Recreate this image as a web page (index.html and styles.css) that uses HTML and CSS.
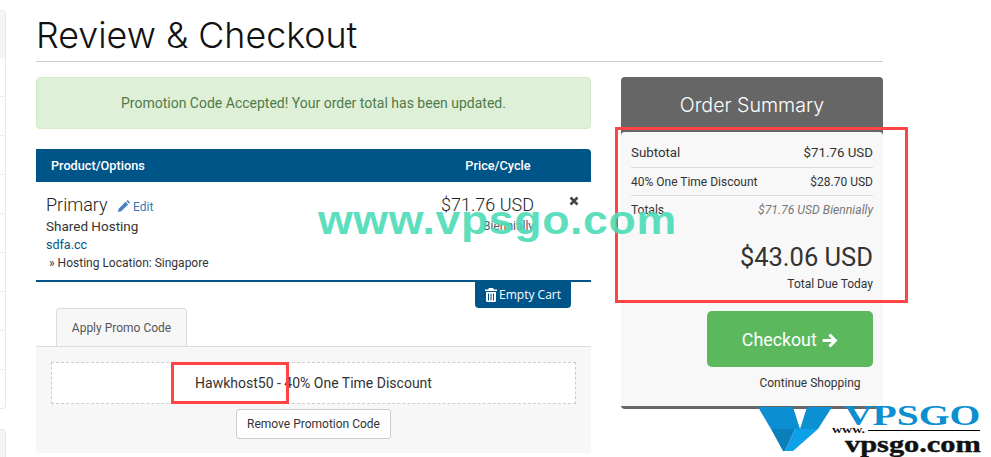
FILE: index.html
```html
<!DOCTYPE html>
<html lang="en">

<head>
    <meta charset="UTF-8">
    <meta name="viewport" content="width=device-width, initial-scale=1.0">
    <title>Review &amp; Checkout</title>
    <link rel="stylesheet" href="styles.css">
</head>

<body>
    <div class="page">
        <aside class="sidebar">
            <div class="side-card">
                <div class="side-head"></div>
                <div class="side-row"></div>
                <div class="side-row"></div>
                <div class="side-row"></div>
                <div class="side-row"></div>
                <div class="side-row"></div>
                <div class="side-row"></div>
                <div class="side-row"></div>
                <div class="side-row"></div>
            </div>
            <div class="side-card side-second">
                <div class="side-head"></div>
            </div>
        </aside>

        <main class="main">
            <h1 class="page-title">Review &amp; Checkout</h1>

            <div class="columns">
                <section class="cart">
                    <div class="alert">Promotion Code Accepted! Your order total has been updated.</div>

                    <div class="cart-head">
                        <div class="col-product">Product/Options</div>
                        <div class="col-price">Price/Cycle</div>
                    </div>

                    <div class="cart-item">
                        <div class="col-product">
                            <div class="item-name">Primary
                                <a class="edit-link" href="#">
                                    <svg class="pencil" viewBox="0 0 14 14" width="13" height="13">
                                        <path d="M1 13l.8-3.6 7.4-7.4 2.8 2.8-7.4 7.4zM10 1.200l.8-.7c.4-.3.9-.3 1.200 0l1.500 1.500c.3.300.3.800 0 1.200l-.7.800z" />
                                    </svg>Edit</a>
                            </div>
                            <div class="item-group">Shared Hosting</div>
                            <div class="item-domain">sdfa.cc</div>
                            <div class="item-option">&raquo; Hosting Location: Singapore</div>
                        </div>
                        <div class="col-price">
                            <div class="item-price">$71.76 USD</div>
                            <div class="item-cycle">Biennially</div>
                        </div>
                        <div class="col-remove">
                            <svg viewBox="0 0 10 10" width="10" height="10">
                                <path d="M1.500 1.500l7 7M8.500 1.500l-7 7" />
                            </svg>
                        </div>
                    </div>

                    <div class="cart-actions">
                        <a class="btn-empty" href="#">
                            <svg viewBox="0 0 12 14" width="12" height="14">
                                <path d="M4 0h4l1 1.500h3V3H0V1.500h3zM1 4h10v8.500c0 .8-.6 1.500-1.300 1.500H2.300C1.600 14 1 13.300 1 12.500zM3 5.500v7h1v-7zM5.500 5.500v7h1v-7zM8 5.500v7h1v-7z" fill-rule="evenodd" />
                            </svg>
                            Empty Cart</a>
                    </div>

                    <div class="tabs">
                        <div class="tab">Apply Promo Code</div>
                    </div>
                    <div class="tab-body">
                        <div class="promo-box">Hawkhost50 - 40% One Time Discount</div>
                        <a class="btn-remove" href="#">Remove Promotion Code</a>
                    </div>
                </section>

                <section class="summary">
                    <h2 class="summary-title">Order Summary</h2>
                    <div class="summary-body">
                        <div class="sum-row"><span>Subtotal</span><span>$71.76 USD</span></div>
                        <div class="sum-row sum-discount"><span>40% One Time Discount</span><span>$28.70 USD</span></div>
                        <div class="sum-totals"><span>Totals</span><em>$71.76 USD Biennially</em></div>
                        <div class="total-due">$43.06 USD</div>
                        <div class="total-label">Total Due Today</div>
                        <a class="btn-checkout" href="#">Checkout
                            <svg viewBox="0 0 16 16" width="17" height="17">
                                <path d="M1.500 8h12M8 2.500L13.500 8 8 13.500" />
                            </svg>
                        </a>
                        <a class="continue" href="#">Continue Shopping</a>
                    </div>
                </section>
            </div>
        </main>
    </div>

    <!-- screenshot annotations -->
    <div class="mark mark-summary"></div>
    <div class="mark mark-code"></div>
    <div class="watermark">www.vpsgo.com</div>
    <div class="logo">
        <svg class="logo-v" viewBox="0 0 74 44" width="74" height="44">
            <path fill="#0c8fd2" d="M0 0h35l7 22H13z" />
            <path fill="#0b90d2" d="M49 0h25L60 22H42z" />
            <path fill="#0a7fba" d="M13 22h24L27 44h-2z" />
            <path fill="#0ea0e8" d="M37 22h23L35 44h-8z" />
        </svg>
        <div class="logo-name">VPSGO</div>
        <div class="logo-www">www.</div>
        <div class="logo-line"></div>
        <div class="logo-url">vpsgo.com</div>
    </div>
</body>

</html>
```

FILE: styles.css
```css
html,
body {
    height: 100%;
    margin: 0;
    overflow: hidden;
}

body {
    font-family: Roboto, "Liberation Sans", sans-serif;
    font-size: 13px;
    color: #333;
    background-color: #fff;
    position: relative;
}

a {
    text-decoration: none;
    color: inherit;
}

.page {
    display: flex;
    align-items: flex-start;
}

/* cut off sidebar on the left edge */
.sidebar {
    width: 6px;
    padding-top: 10px;
    flex: none;
}

.side-card {
    border: 1px solid #e8e8e8;
    border-left: none;
    border-radius: 0 4px 4px 0;
    height: 397px;
}

.side-head {
    height: 46px;
    background-color: #f5f5f5;
    border-bottom: 1px solid #eee;
}

.side-row {
    height: 38px;
    border-bottom: 1px solid #eee;
}

.side-second {
    margin-top: 20px;
    height: 28px;
    border-bottom: none;
    border-radius: 0 4px 0 0;
}

.side-second .side-head {
    height: 28px;
    border-bottom: none;
}

.main {
    width: 847px;
    margin-left: 30px;
}

.page-title {
    margin: 14px 0 0;
    height: 47px;
    font-family: Inter, sans-serif;
    font-weight: 300;
    font-size: 35.800px;
    line-height: 43px;
    color: #111;
    border-bottom: 1px solid #ccc;
}

.columns {
    display: flex;
    justify-content: space-between;
    align-items: flex-start;
    margin-top: 15px;
}

.cart {
    width: 555px;
}

.alert {
    height: 50px;
    line-height: 50px;
    text-align: center;
    font-size: 14px;
    color: #4f7a4a;
    background-color: #dff0d8;
    border: 1px solid #d6e9c6;
    border-radius: 4px;
    margin-bottom: 20px;
}

.cart-head {
    display: flex;
    height: 33px;
    line-height: 33px;
    font-size: 12.700px;
    font-weight: 500;
    background-color: #058;
    color: #fff;
    border-radius: 0 4px 0 0;
    padding-left: 15px;
}

.cart-head .col-product {
    width: 365px;
}

.cart-head .col-price {
    width: 164px;
    text-align: center;
}

.cart-item {
    display: flex;
    height: 98px;
    border-bottom: 2px solid #058;
    padding-left: 10px;
}

.cart-item .col-product {
    width: 370px;
    padding-top: 12px;
}

.item-name {
    font-size: 18px;
    font-weight: 300;
    line-height: 22px;
    color: #222;
}

.edit-link {
    font-size: 12px;
    font-weight: 400;
    color: #337ab7;
    margin-left: 5px;
}

.pencil {
    fill: #4a80bd;
    vertical-align: -2px;
    margin-right: 3px;
}

.item-group {
    font-size: 13.500px;
    line-height: 19px;
    margin-top: -1px;
}

.item-domain {
    color: #058;
    font-size: 12.500px;
    line-height: 17px;
}

.item-option {
    font-size: 12px;
    line-height: 17px;
    margin-top: 2px;
    padding-left: 3px;
}

.cart-item .col-price {
    width: 118px;
    padding-top: 12px;
    text-align: right;
}

.item-price {
    font-size: 18px;
    font-weight: 300;
    line-height: 22px;
    color: #222;
}

.item-cycle {
    font-size: 12px;
    margin-top: 3px;
    color: #555;
}

.col-remove {
    margin-left: 35px;
    padding-top: 14px;
}

.col-remove svg {
    stroke: #444;
    stroke-width: 2.500;
    display: block;
}

.cart-actions {
    display: flex;
    justify-content: flex-end;
    padding-right: 20px;
}

.btn-empty {
    height: 26px;
    line-height: 26px;
    padding: 0 10px;
    color: #fff;
    background-color: #058;
    border-radius: 0 0 4px 4px;
    font-family: "Open Sans", sans-serif;
    font-size: 12px;
}

.btn-empty svg {
    fill: #fff;
    vertical-align: -3px;
    margin-right: -1px;
}

.tabs {
    padding-left: 20px;
}

.tab {
    display: inline-block;
    width: 129px;
    height: 37px;
    line-height: 38px;
    text-align: center;
    font-size: 12px;
    color: #555;
    background-color: #f7f7f7;
    border: 1px solid #ddd;
    border-bottom: none;
    border-radius: 4px 4px 0 0;
    vertical-align: bottom;
}

.tab-body {
    background-color: #f7f7f7;
    border-top: 1px solid #ddd;
    padding: 15px 15px 0;
    text-align: center;
    height: 91px;
}

.promo-box {
    height: 40px;
    line-height: 40px;
    border: 1px dashed #ccc;
    font-size: 14px;
    background-color: #fff;
    margin-bottom: 5px;
}

.btn-remove {
    display: inline-block;
    height: 28px;
    line-height: 28px;
    padding: 0 10px;
    font-size: 12px;
    background-color: #fff;
    border: 1px solid #ccc;
    border-radius: 3px;
}

.summary {
    width: 262px;
    border-bottom: 3px solid #666;
    border-radius: 4px;
    background-color: #666;
}

.summary-title {
    margin: 0;
    height: 55px;
    line-height: 56px;
    text-align: center;
    font-family: Inter, sans-serif;
    font-weight: 300;
    font-size: 19.600px;
    color: #fff;
}

.summary-body {
    height: 274px;
    box-sizing: border-box;
    padding: 0 10px;
    text-align: right;
    border-radius: 4px 4px 0 0;
    background-color: #f8f8f8;
}

.sum-row,
.sum-totals {
    display: flex;
    justify-content: space-between;
    align-items: center;
}

.sum-row {
    height: 30px;
    padding-top: 5px;
    border-bottom: 1px solid #ddd;
    font-size: 13.300px;
}

.sum-discount {
    height: 27px;
    padding-top: 0;
    font-size: 12px;
}

.sum-totals {
    height: 27px;
    font-size: 12px;
}

.sum-totals em {
    color: #777;
    font-size: 12.200px;
}

.total-due {
    font-size: 25.500px;
    line-height: 30px;
    margin-top: 19px;
}

.total-label {
    font-size: 12px;
    line-height: 18px;
    margin-top: 3px;
}

.btn-checkout {
    display: block;
    height: 56px;
    line-height: 57px;
    width: 166px;
    margin: 18px 0 0 76px;
    text-align: center;
    font-size: 17.800px;
    color: #fff;
    background-color: #5cb85c;
    border-radius: 5px;
}

.btn-checkout svg {
    fill: none;
    stroke: #fff;
    stroke-width: 2.800;
    vertical-align: -3px;
}

.continue {
    display: block;
    text-align: center;
    margin: 9px 0 0 96px;
    width: 166px;
    font-size: 12px;
}

/* annotations over the shot */
.mark {
    position: absolute;
    border: 3px solid #f44;
}

.mark-summary {
    left: 615px;
    top: 127px;
    width: 287px;
    height: 170px;
}

.mark-code {
    left: 171px;
    top: 362px;
    width: 112px;
    height: 36px;
}

.watermark {
    position: absolute;
    left: 318px;
    top: 198px;
    font-family: "Liberation Sans", sans-serif;
    font-weight: 700;
    font-size: 41px;
    letter-spacing: 0.550px;
    line-height: 44px;
    color: #4cdcb8;
    opacity: 0.9;
    white-space: nowrap;
    transform: scaleX(1.090);
    transform-origin: left top;
}

.logo {
    position: absolute;
    left: 758px;
    top: 407px;
    width: 233px;
    height: 50px;
}

.logo-v {
    display: block;
}

.logo-name,
.logo-www,
.logo-url {
    position: absolute;
    font-family: "Liberation Serif", serif;
    font-weight: 700;
    white-space: nowrap;
    transform-origin: left top;
}

.logo-name {
    left: 86px;
    top: -9px;
    font-size: 30px;
    line-height: 34px;
    color: #0b8fd0;
    transform: scaleX(1.320);
}

.logo-www {
    left: 74px;
    top: 17px;
    font-size: 10px;
    line-height: 12px;
    color: #111;
    transform: scaleX(1.400);
}

.logo-line {
    position: absolute;
    left: 110px;
    top: 23px;
    width: 112px;
    border-bottom: 1px solid #000;
}

.logo-url {
    left: 87px;
    top: 25px;
    font-size: 23px;
    line-height: 26px;
    color: #111;
    -webkit-text-stroke: 0.400px #111;
    transform: scaleX(1.320);
}
```
